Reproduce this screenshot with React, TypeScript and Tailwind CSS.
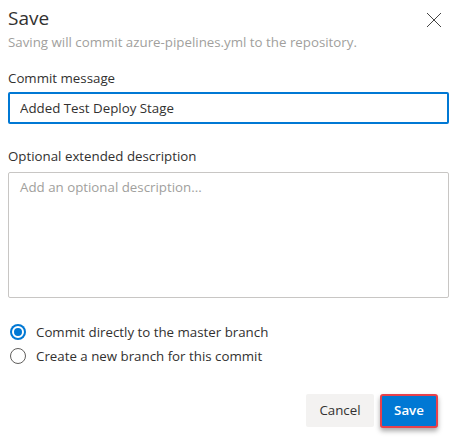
import { useState } from "react"

const font = { fontFamily: '"Segoe UI", "Open Sans", "Noto Sans", sans-serif' }

function Radio({ checked, label, onClick }: { checked: boolean; label: string; onClick: () => void }) {
  return (
    <button type="button" onClick={onClick} className="flex h-[20px] items-center gap-[10px] text-left">
      {checked ? (
        <span className="flex h-[16px] w-[16px] items-center justify-center rounded-full bg-[#0078d4]">
          <span className="h-[12px] w-[12px] rounded-full border-[2px] border-white bg-[#0078d4]" />
        </span>
      ) : (
        <span className="h-[16px] w-[16px] rounded-full border border-[#605e5c] bg-white" />
      )}
      <span className="text-[13.3px] leading-[20px] text-[#323130]">{label}</span>
    </button>
  )
}

export default function App() {
  const [branch, setBranch] = useState("master")

  return (
    <div className="h-[446px] w-[458px] bg-white text-[#323130]" style={font}>
      <div className="px-[8px] pt-[4px]">
        <div className="flex items-start justify-between">
          <h1 className="text-[19px] font-medium leading-[28px]">Save</h1>
          <button type="button" className="mr-[8px] mt-[8px] text-[#444]" aria-label="Close">
            <svg width="16" height="16" viewBox="0 0 16 16" fill="none" stroke="currentColor" strokeWidth="1">
              <path d="M1 1L15 15M15 1L1 15" />
            </svg>
          </button>
        </div>
        <p className="mt-[1px] text-[13.3px] leading-[18px] text-[#a19f9d]">
          Saving will commit azure-pipelines.yml to the repository.
        </p>

        <label className="mt-[17px] block text-[13.3px] leading-[20px]">Commit message</label>
        <input
          defaultValue="Added Test Deploy Stage"
          className="mt-[4px] block h-[32px] w-[441px] rounded-[2px] border-[2px] border-[#0078d4] px-[10px] text-[13.3px] text-[#323130] outline-none"
        />

        <label className="mt-[22px] block text-[13.3px] leading-[20px]">Optional extended description</label>
        <textarea
          placeholder="Add an optional description..."
          className="mt-[6px] block h-[126px] w-[441px] resize-none rounded-[2px] border border-[#c8c6c4] px-[11px] py-[5px] text-[13.3px] placeholder:text-[#a19f9d] outline-none"
        />

        <div className="mt-[24px] flex flex-col gap-[4px] pl-[2px]">
          <Radio checked={branch === "master"} label="Commit directly to the master branch" onClick={() => setBranch("master")} />
          <Radio checked={branch === "new"} label="Create a new branch for this commit" onClick={() => setBranch("new")} />
        </div>

        <div className="mt-[28px] flex justify-end gap-[6px] pr-[12px]">
          <button type="button" className="h-[33px] w-[68px] rounded-[2px] bg-[#f3f2f1] text-[13.3px] text-[#323130]">
            Cancel
          </button>
          <button
            type="button"
            className="h-[34px] w-[58px] rounded-[3px] border-[2px] border-[#e8414b] bg-[#0078d4] text-[13.3px] font-semibold text-white shadow-[0_3px_5px_rgba(0,0,0,0.35)]"
          >
            Save
          </button>
        </div>
      </div>
    </div>
  )
}
